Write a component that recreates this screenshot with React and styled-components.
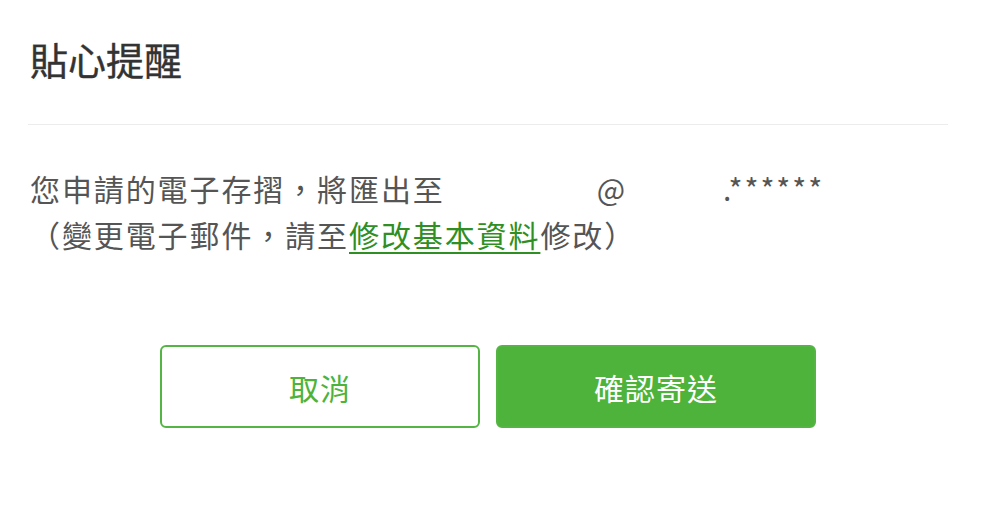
import React from "react";
import styled, { createGlobalStyle } from "styled-components";

const GlobalStyle = createGlobalStyle`
  html, body {
    margin: 0;
    padding: 0;
    background: #ffffff;
  }
  body {
    font-family: "Noto Sans CJK TC", "Noto Sans", sans-serif;
  }
`;

const Dialog = styled.div`
  width: 981px;
  height: 529px;
  box-sizing: border-box;
  padding: 0 33px 0 28px;
  background: #ffffff;
`;

const Header = styled.div`
  padding: 31px 0 0 2px;
  height: 125px;
  box-sizing: border-box;
  border-bottom: 1px solid #ececec;
`;

const Title = styled.h2`
  margin: 0;
  font-size: 38px;
  line-height: 56px;
  font-weight: 400;
  color: #333333;
  -webkit-text-stroke: 0.4px #333333;
`;

const Body = styled.div`
  padding: 40px 0 0 2px;
  font-size: 30px;
  line-height: 46px;
  letter-spacing: 1.9px;
  color: #555555;
`;

const Line = styled.div`
  white-space: nowrap;
`;

const Masked = styled.span`
  display: inline-block;
  width: ${({ $w }) => $w}px;
`;

const Link = styled.a`
  color: #2f8f24;
  text-decoration: underline;
  text-underline-offset: 5px;
  text-decoration-thickness: 2px;
  cursor: pointer;
`;

const Actions = styled.div`
  display: flex;
  justify-content: center;
  gap: 16px;
  margin-top: 88px;
`;

const Button = styled.button`
  width: 320px;
  height: 83px;
  box-sizing: border-box;
  border-radius: 6px;
  border: 2px solid #55b544;
  background: ${({ $primary }) => ($primary ? "#4db33a" : "#ffffff")};
  color: ${({ $primary }) => ($primary ? "#ffffff" : "#4db33a")};
  font-family: "Noto Sans CJK TC", "Noto Sans", sans-serif;
  font-size: 30px;
  letter-spacing: 1px;
  cursor: pointer;
`;

export default function App() {
  return (
    <>
      <GlobalStyle />
      <Dialog>
        <Header>
          <Title>貼心提醒</Title>
        </Header>
        <Body>
          <Line>
            您申請的電子存摺，將匯出至<Masked $w={152} />@<Masked $w={96} />.******
          </Line>
          <Line>
            （變更電子郵件，請至<Link>修改基本資料</Link>修改）
          </Line>
        </Body>
        <Actions>
          <Button>取消</Button>
          <Button $primary>確認寄送</Button>
        </Actions>
      </Dialog>
    </>
  );
}
